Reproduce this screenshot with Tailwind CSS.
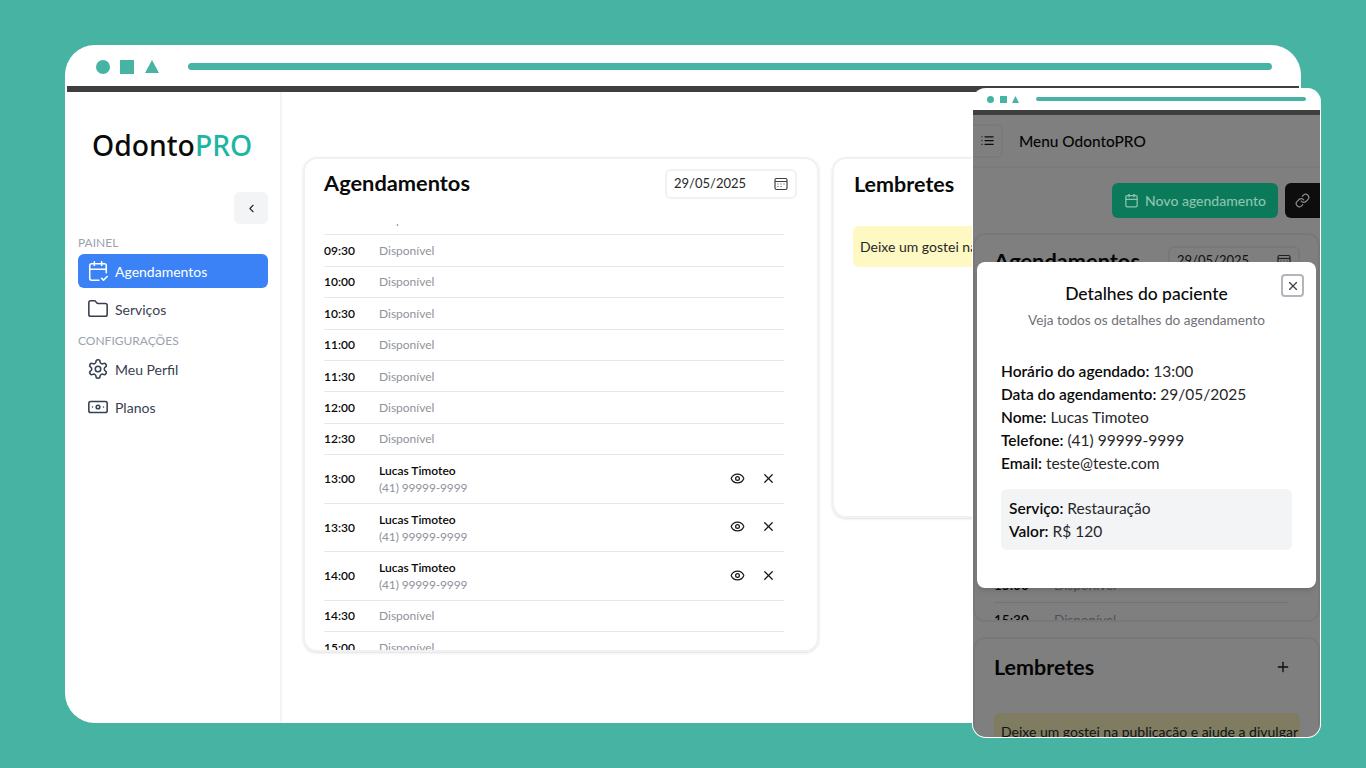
<!DOCTYPE html>
<html lang="pt-BR">
<head>
    <meta charset="UTF-8">
    <meta name="viewport" content="width=device-width, initial-scale=1.0">
    <title>OdontoPRO</title>
    <script src="https://cdn.jsdelivr.net/npm/@tailwindcss/browser@4"></script>
</head>
<body class="bg-[#47b3a3] overflow-hidden font-['Lato',sans-serif]">
<div class="relative w-[1366px] h-[768px] overflow-hidden">

    <!-- desktop window -->
    <div class="absolute left-[65px] top-[45px] w-[1236px] h-[678px] bg-white rounded-[30px] overflow-hidden flex flex-col">
        <div class="h-[41px] shrink-0 flex items-center pl-[31px] pr-[29px] pt-[2px]">
            <span class="w-[14px] h-[14px] rounded-full bg-[#47b3a3]"></span>
            <span class="w-[14px] h-[14px] bg-[#47b3a3] ml-[10px]"></span>
            <svg class="ml-[11px]" width="14" height="13" viewBox="0 0 14 13"><path d="M7 0 14 13H0Z" fill="#47b3a3"/></svg>
            <span class="flex-1 h-[7px] rounded-full bg-[#47b3a3] ml-[29px]"></span>
        </div>
        <div class="h-[6px] shrink-0 mx-[2px] bg-[#3f3f3f]"></div>
        <div class="flex flex-1 min-h-0">
            <aside class="w-[217px] shrink-0 border-r-2 border-[#f3f4f6] pl-[13px] pr-[12px]">
                <div class="pl-[14px] pt-[34px] h-[100px] text-[28.3px] leading-[38px] font-medium font-['Noto_Sans',sans-serif] text-[#0a0a0a]">Odonto<span class="text-[#1db5a3]">PRO</span></div>
                <div class="flex justify-end">
                    <button class="w-[34px] h-[32px] rounded-md bg-[#f3f4f6] flex items-center justify-center text-[#27272a]">
                        <svg class="w-[13px] h-[13px]" viewBox="0 0 24 24" fill="none" stroke="currentColor" stroke-width="2" stroke-linecap="round" stroke-linejoin="round"><path d="m15 18-6-6 6-6"/></svg>
                    </button>
                </div>
                <div class="mt-[11px] text-[12px] leading-[16px] text-[#9ca3af]">PAINEL</div>
                <a class="mt-[3px] h-[34px] rounded-md bg-[#3b82f6] text-white flex items-center gap-[6px] pl-[9px] text-[14px]">
                    <svg class="w-[22px] h-[22px]" viewBox="0 0 24 24" fill="none" stroke="currentColor" stroke-width="1.7" stroke-linecap="round" stroke-linejoin="round"><path d="M8 2v4"/><path d="M16 2v4"/><path d="M21 14V6a2 2 0 0 0-2-2H5a2 2 0 0 0-2 2v14a2 2 0 0 0 2 2h8"/><path d="M3 10h18"/><path d="m16 20 2 2 4-4"/></svg>
                    Agendamentos
                </a>
                <a class="mt-[4px] h-[34px] text-[#374151] flex items-center gap-[6px] pl-[9px] text-[14px]">
                    <svg class="w-[22px] h-[22px]" viewBox="0 0 24 24" fill="none" stroke="currentColor" stroke-width="1.7" stroke-linecap="round" stroke-linejoin="round"><path d="M20 20a2 2 0 0 0 2-2V8a2 2 0 0 0-2-2h-7.9a2 2 0 0 1-1.69-.9L9.6 3.9A2 2 0 0 0 7.93 3H4a2 2 0 0 0-2 2v13a2 2 0 0 0 2 2Z"/></svg>
                    Serviços
                </a>
                <div class="mt-[7px] text-[12px] leading-[16px] text-[#9ca3af]">CONFIGURAÇÕES</div>
                <a class="mt-[3px] h-[34px] text-[#374151] flex items-center gap-[6px] pl-[9px] text-[14px]">
                    <svg class="w-[22px] h-[22px]" viewBox="0 0 24 24" fill="none" stroke="currentColor" stroke-width="1.7" stroke-linecap="round" stroke-linejoin="round"><path d="M12.22 2h-.44a2 2 0 0 0-2 2v.18a2 2 0 0 1-1 1.73l-.43.25a2 2 0 0 1-2 0l-.15-.08a2 2 0 0 0-2.73.73l-.22.38a2 2 0 0 0 .73 2.73l.15.1a2 2 0 0 1 1 1.72v.51a2 2 0 0 1-1 1.74l-.15.09a2 2 0 0 0-.73 2.73l.22.38a2 2 0 0 0 2.73.73l.15-.08a2 2 0 0 1 2 0l.43.25a2 2 0 0 1 1 1.73V20a2 2 0 0 0 2 2h.44a2 2 0 0 0 2-2v-.18a2 2 0 0 1 1-1.73l.43-.25a2 2 0 0 1 2 0l.15.08a2 2 0 0 0 2.73-.73l.22-.39a2 2 0 0 0-.73-2.73l-.15-.08a2 2 0 0 1-1-1.74v-.5a2 2 0 0 1 1-1.74l.15-.09a2 2 0 0 0 .73-2.73l-.22-.38a2 2 0 0 0-2.73-.73l-.15.08a2 2 0 0 1-2 0l-.43-.25a2 2 0 0 1-1-1.73V4a2 2 0 0 0-2-2z"/><circle cx="12" cy="12" r="3"/></svg>
                    Meu Perfil
                </a>
                <a class="mt-[4px] h-[34px] text-[#374151] flex items-center gap-[6px] pl-[9px] text-[14px]">
                    <svg class="w-[22px] h-[22px]" viewBox="0 0 24 24" fill="none" stroke="currentColor" stroke-width="1.7" stroke-linecap="round" stroke-linejoin="round"><rect x="2" y="6" width="20" height="12" rx="2"/><circle cx="12" cy="12" r="2"/><path d="M6 12h.01"/><path d="M18 12h.01"/></svg>
                    Planos
                </a>
            </aside>

            <main class="flex-1 min-w-0 pl-[21px] pt-[65px] flex gap-[13px] items-start overflow-hidden">
                <section class="w-[516px] h-[495px] shrink-0 rounded-[14px] border-2 border-[#f0f1f3] shadow-sm overflow-hidden flex flex-col">
                    <div class="h-[65px] shrink-0 flex items-center justify-between pl-[19px] pr-[20px] pb-[16px]">
                        <h2 class="text-[21.8px] font-bold text-[#0a0a0a]">Agendamentos</h2>
                        <div class="w-[132px] h-[30px] rounded-md border-2 border-[#f0f1f3] flex items-center justify-between pl-[7px] pr-[7px] text-[13px] text-[#27272a]">
                            29/05/2025
                            <svg width="14" height="14" viewBox="0 0 14 14" fill="none" stroke="#3f3f46" stroke-width="1.2"><rect x="1" y="1.5" width="12" height="11" rx="1.5"/><path d="M1 4.5h12"/><path d="M3.5 7h1M6.5 7h1M9.5 7h1M3.5 9.5h1M6.5 9.500h1"/></svg>
                        </div>
                    </div>
                    <div class="h-[428px] overflow-hidden pl-[19px] pr-[33px]">
                        <div class="-mt-[20px]">
                            <div class="h-[31.4px] pt-[1px] border-b border-[#e5e7eb] flex items-center text-[12px]"><span class="w-[55px] font-semibold text-[#0a0a0a]">09:00</span><span class="text-[#8f939b]">Disponível</span></div>
                            <div class="h-[31.4px] pt-[1px] border-b border-[#e5e7eb] flex items-center text-[12px]"><span class="w-[55px] font-semibold text-[#0a0a0a]">09:30</span><span class="text-[#8f939b]">Disponível</span></div>
                            <div class="h-[31.4px] pt-[1px] border-b border-[#e5e7eb] flex items-center text-[12px]"><span class="w-[55px] font-semibold text-[#0a0a0a]">10:00</span><span class="text-[#8f939b]">Disponível</span></div>
                            <div class="h-[31.4px] pt-[1px] border-b border-[#e5e7eb] flex items-center text-[12px]"><span class="w-[55px] font-semibold text-[#0a0a0a]">10:30</span><span class="text-[#8f939b]">Disponível</span></div>
                            <div class="h-[31.4px] pt-[1px] border-b border-[#e5e7eb] flex items-center text-[12px]"><span class="w-[55px] font-semibold text-[#0a0a0a]">11:00</span><span class="text-[#8f939b]">Disponível</span></div>
                            <div class="h-[31.4px] pt-[1px] border-b border-[#e5e7eb] flex items-center text-[12px]"><span class="w-[55px] font-semibold text-[#0a0a0a]">11:30</span><span class="text-[#8f939b]">Disponível</span></div>
                            <div class="h-[31.4px] pt-[1px] border-b border-[#e5e7eb] flex items-center text-[12px]"><span class="w-[55px] font-semibold text-[#0a0a0a]">12:00</span><span class="text-[#8f939b]">Disponível</span></div>
                            <div class="h-[31.4px] pt-[1px] border-b border-[#e5e7eb] flex items-center text-[12px]"><span class="w-[55px] font-semibold text-[#0a0a0a]">12:30</span><span class="text-[#8f939b]">Disponível</span></div>
                            <div class="h-[48.5px] pt-[1px] border-b border-[#e5e7eb] flex items-center text-[12px]">
                                <span class="w-[55px] font-semibold text-[#0a0a0a]">13:00</span>
                                <div class="flex-1 leading-[17px]"><div class="font-semibold text-[#0a0a0a]">Lucas Timoteo</div><div class="text-[#8f939b] tracking-[-0.15px]">(41) 99999-9999</div></div>
                                <svg class="w-[15px] h-[15px] mr-[16px] -mt-[2px]" viewBox="0 0 24 24" fill="none" stroke="#18181b" stroke-width="2" stroke-linecap="round" stroke-linejoin="round"><path d="M2.062 12.348a1 1 0 0 1 0-.696 10.75 10.75 0 0 1 19.876 0 1 1 0 0 1 0 .696 10.75 10.75 0 0 1-19.876 0"/><circle cx="12" cy="12" r="3"/></svg>
                                <svg class="w-[15px] h-[15px] mr-[8px] -mt-[2px]" viewBox="0 0 24 24" fill="none" stroke="#18181b" stroke-width="2" stroke-linecap="round" stroke-linejoin="round"><path d="M18 6 6 18"/><path d="m6 6 12 12"/></svg>
                            </div>
                            <div class="h-[48.5px] pt-[1px] border-b border-[#e5e7eb] flex items-center text-[12px]">
                                <span class="w-[55px] font-semibold text-[#0a0a0a]">13:30</span>
                                <div class="flex-1 leading-[17px]"><div class="font-semibold text-[#0a0a0a]">Lucas Timoteo</div><div class="text-[#8f939b] tracking-[-0.15px]">(41) 99999-9999</div></div>
                                <svg class="w-[15px] h-[15px] mr-[16px] -mt-[2px]" viewBox="0 0 24 24" fill="none" stroke="#18181b" stroke-width="2" stroke-linecap="round" stroke-linejoin="round"><path d="M2.062 12.348a1 1 0 0 1 0-.696 10.75 10.75 0 0 1 19.876 0 1 1 0 0 1 0 .696 10.75 10.75 0 0 1-19.876 0"/><circle cx="12" cy="12" r="3"/></svg>
                                <svg class="w-[15px] h-[15px] mr-[8px] -mt-[2px]" viewBox="0 0 24 24" fill="none" stroke="#18181b" stroke-width="2" stroke-linecap="round" stroke-linejoin="round"><path d="M18 6 6 18"/><path d="m6 6 12 12"/></svg>
                            </div>
                            <div class="h-[48.5px] pt-[1px] border-b border-[#e5e7eb] flex items-center text-[12px]">
                                <span class="w-[55px] font-semibold text-[#0a0a0a]">14:00</span>
                                <div class="flex-1 leading-[17px]"><div class="font-semibold text-[#0a0a0a]">Lucas Timoteo</div><div class="text-[#8f939b] tracking-[-0.15px]">(41) 99999-9999</div></div>
                                <svg class="w-[15px] h-[15px] mr-[16px] -mt-[2px]" viewBox="0 0 24 24" fill="none" stroke="#18181b" stroke-width="2" stroke-linecap="round" stroke-linejoin="round"><path d="M2.062 12.348a1 1 0 0 1 0-.696 10.75 10.75 0 0 1 19.876 0 1 1 0 0 1 0 .696 10.75 10.75 0 0 1-19.876 0"/><circle cx="12" cy="12" r="3"/></svg>
                                <svg class="w-[15px] h-[15px] mr-[8px] -mt-[2px]" viewBox="0 0 24 24" fill="none" stroke="#18181b" stroke-width="2" stroke-linecap="round" stroke-linejoin="round"><path d="M18 6 6 18"/><path d="m6 6 12 12"/></svg>
                            </div>
                            <div class="h-[31.4px] pt-[1px] border-b border-[#e5e7eb] flex items-center text-[12px]"><span class="w-[55px] font-semibold text-[#0a0a0a]">14:30</span><span class="text-[#8f939b]">Disponível</span></div>
                            <div class="h-[31.4px] pt-[1px] border-b border-[#e5e7eb] flex items-center text-[12px]"><span class="w-[55px] font-semibold text-[#0a0a0a]">15:00</span><span class="text-[#8f939b]">Disponível</span></div>
                        </div>
                    </div>
                </section>
                <section class="w-[516px] h-[361px] shrink-0 rounded-[14px] border-2 border-[#f0f1f3] shadow-sm pl-[19px] pt-[10px]">
                    <h2 class="ml-[1px] text-[21.5px] leading-[30px] font-bold text-[#0a0a0a]">Lembretes</h2>
                    <div class="mt-[27px] h-[41px] rounded-md bg-[#fef9c3] flex items-center pl-[7px] text-[14px] text-[#27272a] whitespace-nowrap">Deixe um gostei na publicação e ajude a divulgar</div>
                </section>
            </main>
        </div>
    </div>

    <!-- phone window -->
    <div class="absolute left-[972px] top-[88px] w-[349px] h-[650px] bg-white rounded-[14px] border border-t-0 border-white overflow-hidden flex flex-col">
        <div class="h-[22px] shrink-0 flex items-center pl-[14px] pr-[14px]">
            <span class="w-[7px] h-[7px] rounded-full bg-[#47b3a3]"></span>
            <span class="w-[7px] h-[7px] bg-[#47b3a3] ml-[6px]"></span>
            <svg class="ml-[5px]" width="7" height="7" viewBox="0 0 7 7"><path d="M3.500 0 7 7H0Z" fill="#47b3a3"/></svg>
            <span class="flex-1 h-[4px] rounded-full bg-[#47b3a3] ml-[17px]"></span>
        </div>
        <div class="h-[5px] shrink-0 bg-[#3f3f3f]"></div>
        <div class="relative flex-1 min-h-0 overflow-hidden">
            <header class="h-[53px] border-b-2 border-[#f3f4f6] flex items-center">
                <button class="w-[30px] h-[34px] rounded-r-md border-2 border-l-0 border-[#f3f4f6] flex items-center justify-center">
                    <svg class="w-[15px] h-[15px]" viewBox="0 0 24 24" fill="none" stroke="#18181b" stroke-width="2" stroke-linecap="round" stroke-linejoin="round"><path d="M3 12h.01"/><path d="M3 18h.01"/><path d="M3 6h.01"/><path d="M8 12h13"/><path d="M8 18h13"/><path d="M8 6h13"/></svg>
                </button>
                <span class="ml-[16px] mt-[3px] text-[15.4px] font-medium text-[#0a0a0a]">Menu OdontoPRO</span>
            </header>
            <div class="h-[35px] mt-[15px] flex justify-end gap-[7px]">
                <button class="relative z-10 w-[166px] h-[35px] rounded-md bg-[#0b7a5a] text-[#8cc4ae] flex items-center justify-center gap-[6px] text-[14px] font-medium">
                    <svg class="w-[15px] h-[15px]" viewBox="0 0 24 24" fill="none" stroke="currentColor" stroke-width="2" stroke-linecap="round" stroke-linejoin="round"><path d="M8 2v4"/><path d="M16 2v4"/><rect x="3" y="4" width="18" height="18" rx="2"/><path d="M3 10h18"/></svg>
                    Novo agendamento
                </button>
                <button class="relative z-10 w-[35px] h-[35px] rounded-l-md bg-[#0d0d0d] text-[#8a8a8a] flex items-center justify-center">
                    <svg class="w-[15px] h-[15px]" viewBox="0 0 24 24" fill="none" stroke="currentColor" stroke-width="2" stroke-linecap="round" stroke-linejoin="round"><path d="M10 13a5 5 0 0 0 7.54.54l3-3a5 5 0 0 0-7.07-7.07l-1.72 1.71"/><path d="M14 11a5 5 0 0 0-7.54-.54l-3 3a5 5 0 0 0 7.07 7.07l1.71-1.71"/></svg>
                </button>
            </div>
            <section class="mt-[15px] h-[389px] rounded-[12px] border-2 border-[#f0f1f3] overflow-hidden pl-[19px] pr-[18px]">
                <div class="h-[30px] mt-[11px] flex items-center justify-between">
                    <h2 class="text-[21.8px] font-bold text-[#0a0a0a]">Agendamentos</h2>
                    <div class="w-[132px] h-[30px] rounded-md border-2 border-[#f0f1f3] flex items-center justify-between px-[7px] text-[13px] text-[#27272a]">
                        29/05/2025
                        <svg width="14" height="14" viewBox="0 0 14 14" fill="none" stroke="#3f3f46" stroke-width="1.2"><rect x="1" y="1.500" width="12" height="11" rx="1.5"/><path d="M1 4.500h12"/><path d="M3.500 7h1M6.500 7h1M9.500 7h1"/></svg>
                    </div>
                </div>
                <div class="pt-[293px] pr-[12px]">
                    <div class="h-[34px] border-b border-[#e5e7eb] flex items-center text-[13.5px]"><span class="w-[60px] font-semibold text-[#0a0a0a]">15:00</span><span class="text-[#9ca3af]">Disponível</span></div>
                    <div class="h-[34px] flex items-center text-[13.5px]"><span class="w-[60px] font-semibold text-[#0a0a0a]">15:30</span><span class="text-[#9ca3af]">Disponível</span></div>
                </div>
            </section>
            <section class="mt-[15px] h-[200px] rounded-[12px] border-2 border-[#f0f1f3] pl-[19px] pr-[18px]">
                <div class="h-[56px] flex items-center justify-between pr-[9px]">
                    <h2 class="text-[21.5px] font-bold text-[#0a0a0a]">Lembretes</h2>
                    <svg class="w-[16px] h-[16px]" viewBox="0 0 24 24" fill="none" stroke="#18181b" stroke-width="2" stroke-linecap="round"><path d="M5 12h14"/><path d="M12 5v14"/></svg>
                </div>
                <div class="mt-[18px] h-[41px] pb-[4px] rounded-md bg-[#fef9c3] flex items-center pl-[7px] text-[14px] text-[#27272a] whitespace-nowrap overflow-hidden">Deixe um gostei na publicação e ajude a divulgar</div>
            </section>

            <div class="absolute inset-0 bg-black/50"></div>

            <!-- dialog -->
            <div class="absolute z-20 left-[4px] top-[147px] w-[339px] h-[326px] bg-white rounded-lg shadow-md pt-[20px]">
                <button class="absolute right-[12px] top-[12px] w-[23px] h-[23px] rounded-[4px] border-2 border-[#b4b4ba] flex items-center justify-center text-[#3f3f46]">
                    <svg class="w-[14px] h-[14px]" viewBox="0 0 24 24" fill="none" stroke="currentColor" stroke-width="2" stroke-linecap="round"><path d="M18 6 6 18"/><path d="m6 6 12 12"/></svg>
                </button>
                <h3 class="text-center text-[17.5px] leading-[24px] font-medium text-[#0a0a0a]">Detalhes do paciente</h3>
                <p class="mt-[4px] text-center text-[13.6px] leading-[20px] text-[#71717a]">Veja todos os detalhes do agendamento</p>
                <div class="mt-[30px] pl-[24px] pr-[24px] text-[15.5px] leading-[23px] text-[#27272a]">
                    <p><b class="font-semibold text-[#0a0a0a]">Horário do agendado:</b> 13:00</p>
                    <p><b class="font-semibold text-[#0a0a0a]">Data do agendamento:</b> 29/05/2025</p>
                    <p><b class="font-semibold text-[#0a0a0a]">Nome:</b> Lucas Timoteo</p>
                    <p><b class="font-semibold text-[#0a0a0a]">Telefone:</b> (41) 99999-9999</p>
                    <p><b class="font-semibold text-[#0a0a0a]">Email:</b> teste@teste.com</p>
                    <div class="mt-[14px] h-[61px] rounded-md bg-[#f3f4f6] px-[8px] py-[8px]">
                        <p><b class="font-semibold text-[#0a0a0a]">Serviço:</b> Restauração</p>
                        <p><b class="font-semibold text-[#0a0a0a]">Valor:</b> R$ 120</p>
                    </div>
                </div>
            </div>
        </div>
    </div>
</div>
</body>
</html>
